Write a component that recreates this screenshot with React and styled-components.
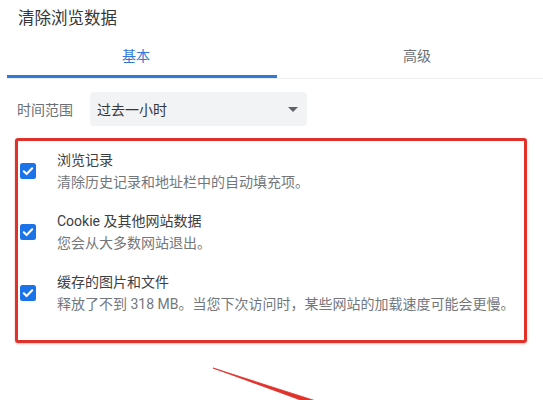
import React from 'react';
import styled, { createGlobalStyle } from 'styled-components';

const GlobalStyle = createGlobalStyle`
    body {
        margin: 0;
        background: #fff;
        font-family: Roboto, 'Noto Sans CJK SC', sans-serif;
        overflow: hidden;
    }
`;

const items = [
    { label: '浏览记录', desc: '清除历史记录和地址栏中的自动填充项。' },
    { label: 'Cookie 及其他网站数据', desc: '您会从大多数网站退出。' },
    {
        label: '缓存的图片和文件',
        desc: '释放了不到 318 MB。当您下次访问时，某些网站的加载速度可能会更慢。',
    },
];

const CheckIcon = () => (
    <svg width="16" height="16" viewBox="0 0 16 16">
        <rect width="16" height="16" rx="2.5" fill="#1a73e8" />
        <path
            d="M3.8 8.3l2.8 2.8 5.6-5.8"
            fill="none"
            stroke="#fff"
            strokeWidth="2.1"
            strokeLinecap="round"
            strokeLinejoin="round"
        />
    </svg>
);

const App = () => {
    return (
        <Page>
            <GlobalStyle />
            <Title>清除浏览数据</Title>
            <TabBar>
                <Tab active>基本</Tab>
                <Tab>高级</Tab>
            </TabBar>
            <RangeRow>
                <RangeLabel>时间范围</RangeLabel>
                <Select>
                    <span>过去一小时</span>
                    <Caret />
                </Select>
            </RangeRow>
            <HighlightBox>
                {items.map((item) => (
                    <Row key={item.label}>
                        <CheckIcon />
                        <RowText>
                            <RowLabel>{item.label}</RowLabel>
                            <RowDesc>{item.desc}</RowDesc>
                        </RowText>
                    </Row>
                ))}
            </HighlightBox>
            <Arrow width="543" height="57" viewBox="0 0 543 57">
                <polygon
                    points="213,25 341,66 339,71"
                    fill="#e0312b"
                    stroke="#e0312b"
                    strokeWidth="0.8"
                    strokeLinejoin="round"
                />
            </Arrow>
        </Page>
    );
};

const Page = styled.div`
    width: 543px;
    height: 400px;
    overflow: hidden;
`;

const Title = styled.div`
    padding: 11px 0 0 18px;
    font-size: 16.5px;
    line-height: 16px;
    color: #35363a;
`;

const TabBar = styled.div`
    display: grid;
    grid-template-columns: 270px 278px;
    margin: 8px 0 0 7px;
    border-bottom: 1px solid #eceef0;
`;

const Tab = styled.div`
    padding: 14px 0 15px;
    font-size: 14px;
    line-height: 14px;
    text-align: center;
    color: ${(p) => (p.active ? '#2f7ad8' : '#6b6f74')};
    box-shadow: ${(p) => (p.active ? 'inset 0 -3px 0 #2f7ad8' : 'none')};
    padding-right: ${(p) => (p.active ? '12px' : '0')};
    padding-left: ${(p) => (p.active ? '0' : '2px')};
`;

const RangeRow = styled.div`
    display: flex;
    align-items: center;
    gap: 17px;
    margin-top: 13px;
    padding-left: 17px;
`;

const RangeLabel = styled.div`
    font-size: 14px;
    color: #6b6f74;
`;

const Select = styled.div`
    display: flex;
    align-items: center;
    justify-content: space-between;
    box-sizing: border-box;
    width: 217px;
    height: 34px;
    padding: 0 9px 0 7px;
    background: #f1f3f4;
    border-radius: 4px;
    font-size: 14px;
    color: #35363a;
`;

const Caret = styled.span`
    width: 0;
    height: 0;
    border-left: 5.5px solid transparent;
    border-right: 5.5px solid transparent;
    border-top: 5.5px solid #5f6368;
`;

const HighlightBox = styled.div`
    box-sizing: border-box;
    width: 512px;
    margin: 12px 0 0 15px;
    padding: 0 0 16px 2px;
    border: 3px solid #e0312b;
    border-radius: 3px;
    box-shadow: 0 1px 2px rgba(224, 49, 43, 0.35);
`;

const Row = styled.div`
    display: flex;
    align-items: center;
    gap: 21px;
    padding: 8px 0 9px;
`;

const RowText = styled.div`
    display: flex;
    flex-direction: column;
    font-size: 14px;
    line-height: 22px;
`;

const RowLabel = styled.div`
    color: #3c4043;
`;

const RowDesc = styled.div`
    color: #73777c;
`;

const Arrow = styled.svg`
    display: block;
`;

export default App;
